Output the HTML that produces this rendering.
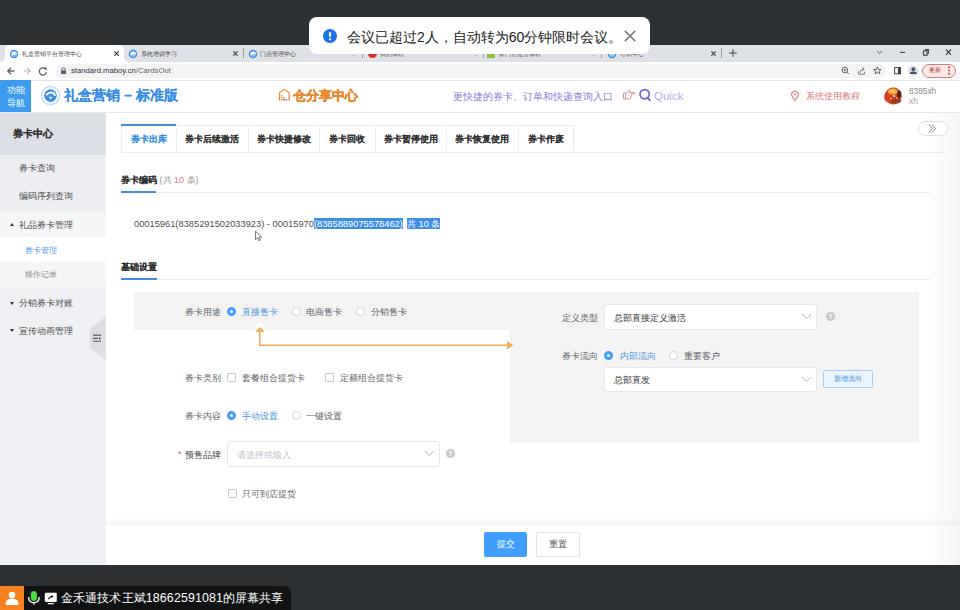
<!DOCTYPE html>
<html><head><meta charset="utf-8">
<style>
*{margin:0;padding:0;box-sizing:border-box}
html,body{width:960px;height:610px;overflow:hidden;background:#fff;font-family:"Liberation Sans",sans-serif;color:#333}
.a{position:absolute;white-space:nowrap}
#topbar{left:0;top:0;width:960px;height:45px;background:#2c3033}
#tabstrip{left:0;top:45px;width:960px;height:17px;background:#dee1e6}
#toolbar{left:0;top:62px;width:960px;height:19px;background:#fff;border-bottom:1px solid #e3e3e3}
#omni{left:55px;top:64px;width:831px;height:14px;border-radius:7px;background:#f1f3f4}
#hdr{left:0;top:81px;width:960px;height:32px;background:#fff;border-bottom:1px solid #e8e8e8}
#side{left:0;top:113px;width:106px;height:452px;background:#eff0f3}
#main{left:106px;top:113px;width:854px;height:452px;background:#fff}
#botbar{left:0;top:565px;width:960px;height:45px;background:#2c3033}
.tt{font-size:6px;color:#3c4043;line-height:10px;margin-top:0.7px}
.fav{width:9px;height:9px;border-radius:50%}
.tx{font-size:9px;color:#5f6368;line-height:9px}
.dv{width:1px;height:10px;background:#a0a4a8}
.sm{font-size:8.7px;color:#4a4a4a;line-height:12px}
.xs{font-size:8.1px;line-height:10px}
.tri{width:0;height:0;border-left:2px solid transparent;border-right:2px solid transparent}
.tri.up{border-bottom:3.5px solid #333}
.tri.dn{border-top:3.5px solid #333}
.tbt{top:125.5px;height:27px;line-height:27px;text-align:center;font-size:8.5px;font-weight:bold;color:#333;text-shadow:0.25px 0 0 currentColor}
.tdv{top:125px;width:1px;height:27px;background:#eceef0}
.sel{background:#3d8ee8;color:#fff;padding-top:1.2px;padding-bottom:0}
.lb{font-size:9px;color:#606266;line-height:12px;margin-top:0.8px}
.rdo{width:9px;height:9px;border-radius:50%;border:1px solid #cfd3d8;background:#fff}
.rdo.on{border:3px solid #409eff;background:#fff}
.chk{width:9px;height:9px;border:1px solid #c8ccd2;border-radius:1px;background:#fff}
.sel2{border:1px solid #e5e7eb;border-radius:3px}
.chev{width:7px;height:7px;border-right:1px solid #b0b4ba;border-bottom:1px solid #b0b4ba;transform:rotate(45deg) scaleX(1.2)}
.qm{width:9px;height:9px;border-radius:50%;background:#c8c8c8;color:#fff;font-size:7px;font-weight:bold;text-align:center;line-height:9px}
</style></head><body>
<div class="a" id="topbar"></div>
<div class="a" id="tabstrip"></div>
<!-- active tab -->
<div class="a" style="left:124px;top:57px;width:5px;height:5px;background:#fff"></div>
<div class="a" style="left:124px;top:57px;width:5px;height:5px;background:#dee1e6;border-bottom-left-radius:5px"></div>
<div class="a" style="left:0px;top:57px;width:5px;height:5px;background:#fff"></div>
<div class="a" style="left:0px;top:57px;width:5px;height:5px;background:#dee1e6;border-bottom-right-radius:5px"></div>

<div class="a" style="left:5px;top:45px;width:119px;height:17px;background:#fff;border-radius:5px 5px 0 0"></div>
<svg class="a" style="left:9px;top:49px" width="10" height="10" viewBox="0 0 10 10"><circle cx="5" cy="5" r="3.5" fill="#cfe4f8" stroke="#3f93e6" stroke-width="1.5"/><path d="M2.8,4.6 Q5.2,3.2 7.9,4.6" stroke="#fff" stroke-width="1.2" fill="none"/><path d="M4,6.2 L5.4,7.3 L7.2,5.6" stroke="#3f93e6" stroke-width="0.9" fill="none"/></svg>
<div class="a tt" style="left:22px;top:48px">礼盒营销平台管理中心</div>
<svg class="a" style="left:112.5px;top:50px" width="7" height="7"><path d="M1.4,1.4 L5.6,5.6 M5.6,1.4 L1.4,5.6" stroke="#3c4043" stroke-width="1.2"/></svg>
<!-- tab 2 -->
<svg class="a" style="left:128px;top:49px" width="10" height="10" viewBox="0 0 10 10"><circle cx="5" cy="5" r="3.5" fill="#cfe4f8" stroke="#3f93e6" stroke-width="1.5"/><path d="M2.8,4.6 Q5.2,3.2 7.9,4.6" stroke="#fff" stroke-width="1.2" fill="none"/><path d="M4,6.2 L5.4,7.3 L7.2,5.6" stroke="#3f93e6" stroke-width="0.9" fill="none"/></svg>
<div class="a tt" style="left:141px;top:48px">系统培训学习</div>
<svg class="a" style="left:232px;top:50px" width="7" height="7"><path d="M1.4,1.4 L5.6,5.6 M5.6,1.4 L1.4,5.6" stroke="#3c4043" stroke-width="1.2"/></svg>
<div class="a dv" style="left:243px;top:48px"></div>
<!-- tab 3 -->
<svg class="a" style="left:248px;top:49px" width="10" height="10" viewBox="0 0 10 10"><circle cx="5" cy="5" r="3.5" fill="#cfe4f8" stroke="#3f93e6" stroke-width="1.5"/><path d="M2.8,4.6 Q5.2,3.2 7.9,4.6" stroke="#fff" stroke-width="1.2" fill="none"/><path d="M4,6.2 L5.4,7.3 L7.2,5.6" stroke="#3f93e6" stroke-width="0.9" fill="none"/></svg>
<div class="a tt" style="left:260px;top:48px">门店管理中心</div>
<div class="a tt" style="left:352px;top:48px;color:#777">‥</div>
<div class="a dv" style="left:362px;top:48px"></div>
<div class="a fav" style="left:368px;top:49px;background:#d93025"></div>
<div class="a tt" style="left:380px;top:48px;color:#555">我的课程</div>
<div class="a tt" style="left:474px;top:48px;color:#777">‥</div>
<div class="a dv" style="left:483px;top:48px"></div>
<div class="a" style="left:487px;top:50px;width:8px;height:8px;background:#8bc34a"></div>
<div class="a tt" style="left:499px;top:48px;color:#555">新门店运营课程</div>
<div class="a tt" style="left:592px;top:48px;color:#777">‥</div>
<div class="a dv" style="left:601px;top:48px"></div>
<svg class="a" style="left:607px;top:49px" width="10" height="10" viewBox="0 0 10 10"><circle cx="5" cy="5" r="3.5" fill="#cfe4f8" stroke="#3f93e6" stroke-width="1.5"/><path d="M2.8,4.6 Q5.2,3.2 7.9,4.6" stroke="#fff" stroke-width="1.2" fill="none"/><path d="M4,6.2 L5.4,7.3 L7.2,5.6" stroke="#3f93e6" stroke-width="0.9" fill="none"/></svg>
<div class="a tt" style="left:620px;top:48px;color:#555">培训中心</div>
<svg class="a" style="left:710px;top:50px" width="7" height="7"><path d="M1.4,1.4 L5.6,5.6 M5.6,1.4 L1.4,5.6" stroke="#3c4043" stroke-width="1.2"/></svg>
<div class="a dv" style="left:721px;top:48px"></div>
<svg class="a" style="left:728px;top:48px" width="10" height="10"><path d="M5,1.2 V8.8 M1.2,5 H8.8" stroke="#3c4043" stroke-width="1"/></svg>
<!-- window controls -->
<svg class="a" style="left:870px;top:45px" width="90" height="17"><path d="M7.2,6 L9.6,8.6 L12,6" stroke="#5f6368" stroke-width="1" fill="none"/><path d="M30,7.4 H35" stroke="#3c4043" stroke-width="1.1"/><rect x="53.5" y="5.8" width="3.6" height="4.4" fill="none" stroke="#3c4043" stroke-width="1.1"/><path d="M55,4.6 H58.4 V8.8" stroke="#3c4043" stroke-width="1.1" fill="none"/><path d="M76,4.5 L81,9.8 M81,4.5 L76,9.8" stroke="#3c4043" stroke-width="1.1"/></svg>

<div class="a" id="toolbar"></div>
<div class="a" id="omni"></div>
<svg class="a" style="left:6px;top:66px" width="45" height="10"><path d="M8.5,5 H2 M5,1.8 L1.8,5 L5,8.2" stroke="#5f6368" stroke-width="1.3" fill="none"/><path d="M17.5,5 H24 M21,1.8 L24.2,5 L21,8.2" stroke="#b8bcc0" stroke-width="1.2" fill="none"/><path d="M40,3.6 A3.6,3.6 0 1 0 40.4,6.2" stroke="#5f6368" stroke-width="1.3" fill="none"/><path d="M37.6,1.2 L40.6,1.4 L40.6,4.4 Z" fill="#5f6368"/></svg>
<svg class="a" style="left:60px;top:67px" width="7" height="8"><path d="M1.8,3.5 V2.5 A1.7,1.7 0 0 1 5.2,2.5 V3.5" stroke="#5f6368" stroke-width="1" fill="none"/><rect x="1" y="3.3" width="5" height="3.8" rx="0.6" fill="#5f6368"/></svg>
<div class="a" style="left:71px;top:65px;font-size:7.7px;color:#303134;line-height:12px">standard.maboy.cn<span style="color:#5f6368">/CardsOut</span></div>
<!-- right toolbar icons -->
<svg class="a" style="left:838px;top:64px" width="118" height="14"><circle cx="6.8" cy="6" r="2.8" fill="none" stroke="#5f6368" stroke-width="1"/><path d="M8.8,8 L10.8,10 M5.6,6 H8 M6.8,4.8 V7.2" stroke="#5f6368" stroke-width="1"/><path d="M20.5,7.2 V10.2 H26.5 V7.8 M22,8.6 Q22.8,5.2 26,5 M24.3,3.4 L26.3,5 L24.3,6.6" stroke="#6a6e72" stroke-width="0.9" fill="none"/><path d="M39.4,2.8 L40.4,5.4 L43.1,5.5 L41.1,7.2 L41.8,9.8 L39.4,8.4 L37,9.8 L37.7,7.2 L35.7,5.5 L38.4,5.4 Z" fill="none" stroke="#5f6368" stroke-width="0.95"/><rect x="56.6" y="3.6" width="6" height="6.2" fill="none" stroke="#3c4043" stroke-width="1"/><rect x="60" y="3.6" width="2.6" height="6.2" fill="#3c4043"/><circle cx="75.3" cy="6.8" r="5.4" fill="#dde1e8"/><circle cx="75.3" cy="5.2" r="1.9" fill="#4a5468"/><path d="M71.8,10 Q72,7.6 75.3,7.6 Q78.6,7.6 78.8,10 Z" fill="#4a5468"/></svg>
<div class="a" style="left:922px;top:64px;width:34px;height:14px;border-radius:7px;border:1px solid #d07c7c;background:#fce9e7"></div>
<div class="a" style="left:929px;top:66px;font-size:6px;color:#b3261e;line-height:9px">更新</div>
<svg class="a" style="left:947px;top:66px" width="4" height="10"><circle cx="2" cy="1.5" r="0.9" fill="#b3261e"/><circle cx="2" cy="4.6" r="0.9" fill="#b3261e"/><circle cx="2" cy="7.7" r="0.9" fill="#b3261e"/></svg>

<div class="a" id="hdr"></div>
<div class="a" style="left:0;top:80px;width:31px;height:32px;background:#3e9bf0"></div>
<div class="a" style="left:6.5px;top:84px;font-size:9.3px;color:#fff;line-height:12.8px">功能<br>导航</div>
<svg class="a" style="left:40px;top:85px" width="21" height="21" viewBox="0 0 21 21"><circle cx="10.5" cy="10.5" r="8.9" fill="#fff" stroke="#a3cbf0" stroke-width="1.7" stroke-dasharray="1.1 0.7"/><circle cx="10.5" cy="10.6" r="6.3" fill="#3a8de0"/><path d="M6.2,10.2 Q8.5,7 12.2,7.6 Q14.6,8.2 15,10.8" stroke="#fff" stroke-width="1.9" fill="none"/><path d="M8.6,11.2 L10.6,14.6 L12.6,11.6 Q10.6,12.4 8.6,11.2 Z" fill="#fff"/></svg>
<div class="a" style="left:64px;top:87px;font-size:14px;font-weight:900;color:#3a8ee6;line-height:17px;text-shadow:0.4px 0 0 #3a8ee6">礼盒营销 – 标准版</div>
<svg class="a" style="left:278px;top:88px" width="13" height="14" viewBox="0 0 13 14"><defs><linearGradient id="og" x1="0" y1="0" x2="0" y2="1"><stop offset="0" stop-color="#f3a53a"/><stop offset="1" stop-color="#e07838"/></linearGradient></defs><path d="M1.5,12.5 V4.8 L6.3,1.2 L11.2,4.8 V12.5" fill="none" stroke="url(#og)" stroke-width="1.3"/><rect x="3" y="7" width="1.4" height="1.6" fill="#e8903a"/><rect x="3" y="9" width="1.4" height="1.6" fill="#f2c040"/><rect x="5" y="9" width="1.4" height="1.6" fill="#d87a3a"/><rect x="5" y="11" width="4.5" height="1.5" fill="#d88a6a"/><rect x="3" y="11" width="1.4" height="1.5" fill="#d88a3a"/></svg>
<div class="a" style="left:293px;top:86.5px;font-size:13px;font-weight:900;color:#ec8a30;line-height:17px;background:linear-gradient(#f4a33a,#e2723a);-webkit-background-clip:text;-webkit-text-fill-color:transparent;-webkit-text-stroke:0.3px #eb8a36">仓分享中心</div>
<div class="a" style="left:453px;top:89.5px;font-size:10px;color:#8a76d6;line-height:13px">更快捷的券卡、订单和快递查询入口</div>
<svg class="a" style="left:622px;top:89px" width="14" height="11" viewBox="0 0 14 11"><path d="M1.5,4.2 H3.6 V10 H1.5 Z" fill="none" stroke="#d98282" stroke-width="0.9"/><path d="M3.6,4.6 L6.6,1.4 Q7.6,0.8 7.8,1.9 L7.2,3.6 H12.4 Q13.3,3.9 12.4,4.9 H9.6 L8.9,8.8 Q8.6,9.9 7.6,9.9 H3.6" fill="none" stroke="#d98282" stroke-width="0.9"/></svg>
<svg class="a" style="left:638px;top:88px" width="14" height="14" viewBox="0 0 14 14"><circle cx="6.6" cy="6.2" r="4.6" fill="none" stroke="#6d5fd0" stroke-width="1.7"/><path d="M9.5,9.6 L12,12.4" stroke="#6d5fd0" stroke-width="1.7" stroke-linecap="round"/></svg>
<div class="a" style="left:654px;top:88.7px;font-size:11.5px;color:#b5abea;line-height:14px">Quick</div>
<svg class="a" style="left:790px;top:90px" width="10" height="12" viewBox="0 0 10 12"><path d="M5,10.8 L2.3,6.4 A3.3,3.3 0 1 1 7.7,6.4 Z" fill="none" stroke="#e08a8a" stroke-width="1.2" stroke-linejoin="round"/><circle cx="5" cy="4.2" r="1.2" fill="#e8a0a0"/></svg>
<div class="a" style="left:806px;top:91px;font-size:8.5px;color:#d9787a;line-height:11px">系统使用教程</div>
<svg class="a" style="left:883px;top:86px" width="21" height="20" viewBox="0 0 21 20"><circle cx="10.3" cy="10" r="9.6" fill="#f6f0ea"/><circle cx="10.3" cy="10" r="8.4" fill="#c9461f"/><ellipse cx="5" cy="11" rx="3.8" ry="5" fill="#dc3c1c"/><ellipse cx="9.8" cy="5.6" rx="5" ry="3.2" fill="#f2a03a"/><ellipse cx="9.5" cy="5.2" rx="2.6" ry="1.6" fill="#ffc95a"/><ellipse cx="16.2" cy="8.2" rx="1.9" ry="3.6" fill="#4a2816"/><ellipse cx="13" cy="14.8" rx="5" ry="2.6" fill="#9c3c1e"/><circle cx="11.2" cy="10" r="1.1" fill="#fff2dc"/><circle cx="8" cy="12.6" r="0.8" fill="#ffe6c8"/><circle cx="13.6" cy="12.2" r="0.7" fill="#f7d0a0"/></svg>
<div class="a" style="left:909px;top:86px;font-size:8.3px;color:#8a8a8a;line-height:10px">8385xh</div>
<div class="a" style="left:909px;top:96px;font-size:8.3px;color:#a8a8a8;line-height:10px">xh</div>

<div class="a" id="side"></div>
<div class="a" style="left:0;top:113px;width:106px;height:42px;background:#dcdfe5"></div>
<div class="a" style="left:13px;top:127.4px;font-size:9.8px;font-weight:bold;color:#303133;line-height:13px;text-shadow:0.35px 0 0 #303133">券卡中心</div>
<div class="a" style="left:0;top:155px;width:106px;height:57px;background:#eceef2"></div>
<div class="a sm" style="left:19px;top:162px">券卡查询</div>
<div class="a sm" style="left:19px;top:190px">编码序列查询</div>
<div class="a" style="left:0;top:212px;width:106px;height:25px;background:#f4f5f7"></div>
<div class="a sm" style="left:19px;top:219px">礼品券卡管理</div>
<div class="a tri up" style="left:9.5px;top:223.3px"></div>
<div class="a" style="left:0;top:237px;width:106px;height:25px;background:#fff"></div>
<div class="a xs" style="left:25px;top:245.5px;color:#4c97e4">券卡管理</div>
<div class="a" style="left:0;top:262px;width:106px;height:25px;background:#f4f5f7"></div>
<div class="a xs" style="left:25px;top:270px;color:#8d8d8d">操作记录</div>
<div class="a sm" style="left:19px;top:297px">分销券卡对账</div>
<div class="a tri dn" style="left:9.5px;top:301.5px"></div>
<div class="a sm" style="left:19px;top:325px">宣传动画管理</div>
<div class="a tri dn" style="left:9.5px;top:329px"></div>
<svg class="a" style="left:90px;top:316px" width="16" height="45"><polygon points="16,0 0,13 0,32 16,44" fill="#dcdee4"/><rect x="3" y="18.6" width="8" height="1.2" fill="#555"/><rect x="3" y="21.8" width="5" height="1.2" fill="#555"/><polygon points="9,20.8 11,22.4 9,24" fill="#555"/><rect x="3" y="24.6" width="8" height="1.3" fill="#777"/></svg>


<div class="a" id="main"></div>
<!-- tabs -->
<div class="a" style="left:121px;top:124.5px;width:453px;height:28px;border:1px solid #eaecef"></div>
<div class="a" style="left:121px;top:124px;width:55px;height:2px;background:#3d8fe6"></div>
<div class="a tbt" style="left:121px;width:55px;color:#3d8fe6">券卡出库</div>
<div class="a tdv" style="left:176px"></div>
<div class="a tbt" style="left:176px;width:72px">券卡后续激活</div>
<div class="a tdv" style="left:248px"></div>
<div class="a tbt" style="left:248px;width:71px">券卡快捷修改</div>
<div class="a tdv" style="left:319px"></div>
<div class="a tbt" style="left:319px;width:56px">券卡回收</div>
<div class="a tdv" style="left:375px"></div>
<div class="a tbt" style="left:375px;width:71px">券卡暂停使用</div>
<div class="a tdv" style="left:446px"></div>
<div class="a tbt" style="left:446px;width:72px">券卡恢复使用</div>
<div class="a tdv" style="left:518px"></div>
<div class="a tbt" style="left:518px;width:56px">券卡作废</div>
<div class="a" style="left:121px;top:152px;width:824px;height:1px;background:#eceef0"></div>
<!-- section 1 -->
<div class="a" style="left:121px;top:174px;font-size:9px;font-weight:bold;color:#303133;line-height:12px"><span style="text-shadow:0.3px 0 0 #303133">券卡编码</span> <span style="font-weight:normal;color:#999">(共 <span style="color:#d9787a">10</span> 条)</span></div>
<div class="a" style="left:156px;top:192px;width:775px;height:1px;background:#eceef0"></div>
<div class="a" style="left:121px;top:191px;width:35px;height:2px;background:#3d8fe6"></div>
<div class="a" style="left:134px;top:218.8px;font-size:9.3px;color:#505050;line-height:10.5px">00015961(8385291502033923) - 00015970<span class="sel">(8385889075578462)</span> <span class="sel" style="margin-left:1.5px">共 10 条</span></div>
<svg class="a" style="left:250px;top:226px" width="16" height="18"><path d="M5.5,5.2 L5.5,13.6 L7.5,11.7 L9,14.7 L10.4,14.1 L8.9,11.2 L11.8,11.2 Z" fill="#fff" stroke="#6a6a6a" stroke-width="0.9" stroke-linejoin="round"/></svg>
<!-- section 2 -->
<div class="a" style="left:121px;top:261px;font-size:9px;font-weight:bold;color:#303133;line-height:12px;text-shadow:0.3px 0 0 #303133">基础设置</div>
<div class="a" style="left:157px;top:279px;width:774px;height:1px;background:#eceef0"></div>
<div class="a" style="left:121px;top:278px;width:36px;height:2px;background:#3d8fe6"></div>
<!-- gray panel -->
<div class="a" style="left:134px;top:292px;width:785px;height:38px;background:#f3f3f4"></div>
<div class="a" style="left:510px;top:292px;width:409px;height:151px;background:#f3f3f4"></div>

<!-- form -->
<div class="a lb" style="left:185px;top:305px">券卡用途</div>
<div class="a rdo on" style="left:227px;top:307px"></div>
<div class="a lb" style="left:242px;top:305px;color:#4b97e2">直接售卡</div>
<div class="a rdo" style="left:292px;top:307px"></div>
<div class="a lb" style="left:306px;top:305px">电商售卡</div>
<div class="a rdo" style="left:356px;top:307px"></div>
<div class="a lb" style="left:371px;top:305px">分销售卡</div>
<div class="a" style="left:253px;top:321px;width:14px;height:10px;border-radius:50%;background:radial-gradient(closest-side,rgba(255,255,255,0.9),rgba(255,255,255,0))"></div>
<svg class="a" style="left:250px;top:322px" width="270" height="30"><polygon points="10,5 14.8,10 5.2,10" fill="#f3ae5c"/><path d="M9.8,9 V23.3 H258" stroke="#f3ae5c" stroke-width="1.6" fill="none"/><polygon points="263.5,23.3 257,19 257,27.6" fill="#f3ae5c"/></svg>
<div class="a lb" style="left:185px;top:371px">券卡类别</div>
<div class="a chk" style="left:227px;top:373px"></div>
<div class="a lb" style="left:242px;top:371px">套餐组合提货卡</div>
<div class="a chk" style="left:325px;top:373px"></div>
<div class="a lb" style="left:340px;top:371px">定额组合提货卡</div>
<div class="a lb" style="left:185px;top:409px">券卡内容</div>
<div class="a rdo on" style="left:227px;top:411px"></div>
<div class="a lb" style="left:242px;top:409px;color:#4b97e2">手动设置</div>
<div class="a rdo" style="left:292px;top:411px"></div>
<div class="a lb" style="left:306px;top:409px">一键设置</div>
<div class="a" style="left:178px;top:449px;font-size:9px;color:#e05050;line-height:10px">*</div>
<div class="a lb" style="left:185px;top:448px;color:#444">预售品牌</div>
<div class="a sel2" style="left:227px;top:441px;width:213px;height:26px;background:#fff"></div>
<div class="a lb" style="left:237px;top:448px;color:#c0c4cc">请选择或输入</div>
<svg class="a" style="left:424px;top:450px" width="11" height="7"><path d="M1,1 L5.5,5.5 L10,1" stroke="#b4b8be" stroke-width="1" fill="none"/></svg>
<div class="a qm" style="left:446px;top:449px">?</div>
<div class="a chk" style="left:227.5px;top:489px"></div>
<div class="a lb" style="left:242px;top:487px">只可到店提货</div>
<!-- right -->
<div class="a lb" style="left:562px;top:311px">定义类型</div>
<div class="a sel2" style="left:604px;top:304px;width:213px;height:26px;background:#fff"></div>
<div class="a lb" style="left:614px;top:311px;color:#333">总部直接定义激活</div>
<svg class="a" style="left:801px;top:313px" width="11" height="7"><path d="M1,1 L5.5,5.5 L10,1" stroke="#b4b8be" stroke-width="1" fill="none"/></svg>
<div class="a qm" style="left:826px;top:312px">?</div>
<div class="a lb" style="left:562px;top:349px">券卡流向</div>
<div class="a rdo on" style="left:604px;top:351px"></div>
<div class="a lb" style="left:620px;top:349px;color:#4b97e2">内部流向</div>
<div class="a rdo" style="left:669px;top:351px"></div>
<div class="a lb" style="left:684px;top:349px">重要客户</div>
<div class="a sel2" style="left:604px;top:367px;width:213px;height:25px;background:#fff"></div>
<div class="a lb" style="left:614px;top:373px;color:#333">总部直发</div>
<svg class="a" style="left:801px;top:376px" width="11" height="7"><path d="M1,1 L5.5,5.5 L10,1" stroke="#b4b8be" stroke-width="1" fill="none"/></svg>
<div class="a" style="left:823px;top:370px;width:50px;height:18px;border:1px solid #a8cdf0;background:#eaf4fd;border-radius:2px;font-size:7px;color:#3d8fe6;text-align:center;line-height:16px">新增流向</div>
<!-- footer -->
<div class="a" style="left:106px;top:517px;width:854px;height:8px;background:linear-gradient(to bottom,rgba(0,0,0,0),rgba(0,0,0,0.045))"></div>
<div class="a" style="left:106px;top:525px;width:854px;height:40px;background:#fff"></div>
<div class="a" style="left:930px;top:113px;width:30px;height:452px;background:linear-gradient(to right,rgba(0,0,0,0.006),rgba(0,0,0,0.04))"></div>
<div class="a" style="left:484px;top:532px;width:43px;height:25px;background:#409eff;border-radius:2px;color:#fff;font-size:9px;text-align:center;line-height:25px">提交</div>
<div class="a" style="left:536px;top:532px;width:44px;height:25px;background:#fff;border:1px solid #e0e2e6;border-radius:2px;color:#555;font-size:9px;text-align:center;line-height:23px">重置</div>
<div class="a" id="botbar"></div>
<div class="a" style="left:0;top:586px;width:291px;height:24px;background:#111214;border-radius:0 7px 0 0"></div>
<div class="a" style="left:0;top:586px;width:24px;height:24px;background:#f5821f"></div>
<svg class="a" style="left:4px;top:590px" width="16" height="16"><circle cx="8" cy="5" r="3.3" fill="#fff"/><path d="M1.5,15 C1.5,10 4,8.8 8,8.8 C12,8.8 14.5,10 14.5,15 Z" fill="#fff"/></svg>
<svg class="a" style="left:27px;top:590px" width="14" height="16"><rect x="3.6" y="0.8" width="6.6" height="10.4" rx="3.3" fill="#4fdc4a" stroke="#101010" stroke-width="0.5"/><path d="M1.6,7 C1.6,11 4,12.6 6.9,12.6 C9.8,12.6 12.2,11 12.2,7" stroke="#fff" stroke-width="1.3" fill="none"/><rect x="6.3" y="12.4" width="1.3" height="2.4" fill="#fff"/></svg>
<svg class="a" style="left:44px;top:592px" width="14" height="13"><rect x="0.8" y="0.8" width="12" height="9.2" rx="1.2" fill="#fff"/><rect x="3.8" y="11" width="6" height="1.3" fill="#eee"/><path d="M4.3,7.2 Q5.5,4.6 8.2,4.4" stroke="#111" stroke-width="1.1" fill="none"/><path d="M7.4,2.8 L9.6,4.4 L7.4,6 Z" fill="#111"/></svg>
<div class="a" style="left:61px;top:590px;font-size:12.4px;color:#fff;line-height:17px;letter-spacing:0.12px">金禾通技术王斌18662591081的屏幕共享</div>

<!-- toast -->
<div class="a" style="left:309px;top:17px;width:341px;height:37px;background:#fff;border-radius:8px"></div>
<svg class="a" style="left:323px;top:29px" width="14" height="14"><circle cx="7" cy="7" r="7" fill="#1a73e8"/><rect x="5.9" y="3" width="2.2" height="5.2" rx="1.1" fill="#fff"/><circle cx="7" cy="10.3" r="1.15" fill="#fff"/></svg>
<div class="a" style="left:347px;top:28px;font-size:14px;color:#1a1a1a;line-height:18px;font-weight:500">会议已超过2人，自动转为60分钟限时会议。</div>
<svg class="a" style="left:623px;top:29px" width="14" height="14"><path d="M1.8,1.8 L12.2,12.2 M12.2,1.8 L1.8,12.2" stroke="#858585" stroke-width="1.9"/></svg>
<div class="a" style="left:918px;top:121px;width:30px;height:15px;border:1px solid #dedede;border-radius:7.5px;background:#fff"></div>
<svg class="a" style="left:927px;top:123px" width="11" height="11"><path d="M2,1.5 L5.5,5.5 L2,9.5 M5,1.5 L8.5,5.5 L5,9.5" stroke="#707070" stroke-width="0.9" fill="none"/></svg>
</body></html>
